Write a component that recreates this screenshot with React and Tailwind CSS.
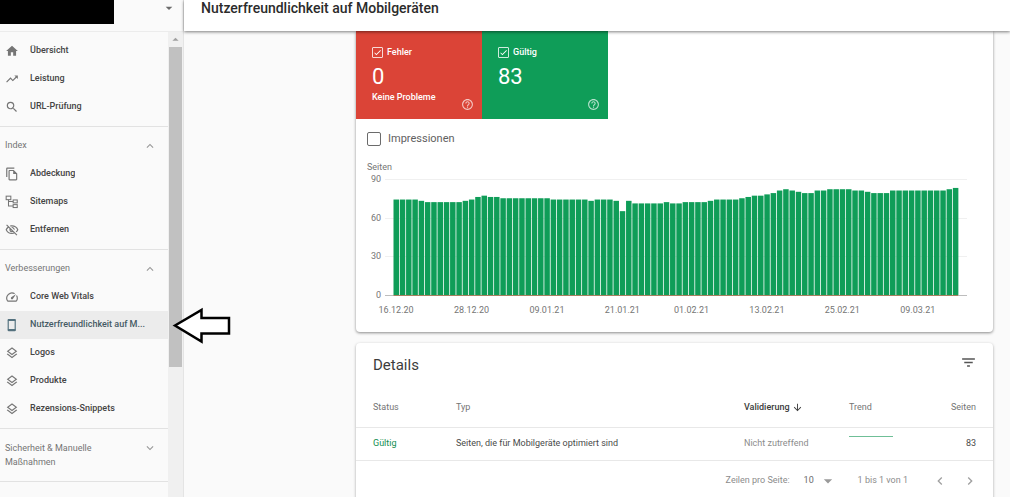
import React, { useState } from 'react';
import {
  MdArrowDownward,
  MdArrowDropDown,
  MdArrowDropUp,
  MdCheck,
  MdChevronLeft,
  MdChevronRight,
  MdExpandLess,
  MdExpandMore,
  MdFilterList,
  MdHelpOutline,
  MdHome,
  MdOutlineFileCopy,
  MdOutlineLayers,
  MdOutlineSpeed,
  MdOutlineVisibilityOff,
  MdSearch,
  MdTrendingUp,
} from 'react-icons/md';

const SitemapIcon = ({ className }) => (
  <svg viewBox="0 0 24 24" className={className} fill="none" stroke="currentColor" strokeWidth="1.8" aria-hidden="true">
    <rect x="2" y="2" width="8" height="6" />
    <rect x="14" y="8.500" width="7" height="5" />
    <rect x="14" y="16.500" width="7" height="5" />
    <path d="M6 8v11H14M6 11H14" />
  </svg>
);

const PhoneIcon = ({ className }) => (
  <svg viewBox="0 0 24 24" className={className} fill="none" stroke="currentColor" aria-hidden="true">
    <rect x="5.5" y="2.5" width="12" height="19" rx="1" strokeWidth="2" />
    <path d="M5 3.5h13M5 20.5h13" strokeWidth="3" />
  </svg>
);

const NAV_SECTIONS = [
  {
    id: 'main',
    items: [
      { label: 'Übersicht', icon: MdHome },
      { label: 'Leistung', icon: MdTrendingUp },
      { label: 'URL-Prüfung', icon: MdSearch },
    ],
  },
  {
    id: 'index',
    title: 'Index',
    items: [
      { label: 'Abdeckung', icon: MdOutlineFileCopy },
      { label: 'Sitemaps', icon: SitemapIcon },
      { label: 'Entfernen', icon: MdOutlineVisibilityOff },
    ],
  },
  {
    id: 'enhancements',
    title: 'Verbesserungen',
    items: [
      { label: 'Core Web Vitals', icon: MdOutlineSpeed },
      { label: 'Nutzerfreundlichkeit auf M...', icon: PhoneIcon, active: true },
      { label: 'Logos', icon: MdOutlineLayers },
      { label: 'Produkte', icon: MdOutlineLayers },
      { label: 'Rezensions-Snippets', icon: MdOutlineLayers },
    ],
  },
];

// Valid pages per day, starting 16.12.20
const VALID_PAGES = [
  74, 74, 74, 74, 73, 72, 72, 72, 72, 72, 72, 73, 74, 76, 77, 76, 76, 75, 75, 75,
  75, 75, 75, 75, 75, 74, 74, 74, 74, 74, 74, 73, 74, 74, 74, 73, 65, 73, 71, 71,
  71, 71, 71, 72, 71, 71, 72, 72, 72, 72, 73, 74, 74, 74, 74, 75, 76, 77, 77, 78,
  79, 81, 82, 81, 80, 79, 79, 81, 81, 82, 82, 82, 82, 81, 81, 80, 79, 79, 79, 81,
  81, 81, 81, 81, 81, 81, 81, 81, 82, 83,
];
const DATE_LABELS = ['16.12.20', '28.12.20', '09.01.21', '21.01.21', '01.02.21', '13.02.21', '25.02.21', '09.03.21'];
const LABEL_DAYS = [0, 12, 24, 36, 47, 59, 71, 83];
const Y_TICKS = [90, 60, 30, 0];

const CHART = { left: 37.5, step: 6.285, barWidth: 5.5, base: 136, unit: 1.29 };

const NavItem = ({ label, icon: Icon, active }) => (
  <a
    href="#"
    aria-current={active ? 'page' : undefined}
    className={`flex h-7 items-center gap-[11px] pl-[5px] pr-2 ${active ? 'bg-[#ececec] text-[#455a64]' : 'text-[#444444]'}`}
  >
    <Icon className={`h-3.5 w-3.5 shrink-0 ${active ? 'text-[#54727f]' : 'text-[#757575]'}`} />
    <span className="truncate font-medium">{label}</span>
  </a>
);

const NavSection = ({ title, items }) => (
  <div className="border-b border-[#e2e2e2] py-[5px]">
    {title && (
      <button type="button" className="flex h-7 w-full items-center justify-between pl-[5px] pr-[11px] text-[#757575]">
        {title}
        <MdExpandLess className="h-3.5 w-3.5 text-[#999999]" />
      </button>
    )}
    {items.map(item => <NavItem key={item.label} {...item} />)}
  </div>
);

const Sidebar = () => (
  <aside className="flex w-[184px] shrink-0 flex-col border-r border-[#e4e4e4]">
    <button type="button" aria-label="Property auswählen" className="flex h-8 shrink-0 items-start justify-between border-b border-[#ececec] pr-1.5">
      <span className="h-6 w-[114px] bg-black" />
      <MdArrowDropDown className="h-4 w-4 text-[#6b6b6b]" />
    </button>
    <div className="flex min-h-0 flex-1">
      <nav className="min-w-0 flex-1 overflow-hidden text-[9px]">
        {NAV_SECTIONS.map(section => <NavSection key={section.id} {...section} />)}
        <div className="border-b border-[#e2e2e2] py-3">
          <button type="button" className="flex w-full items-start justify-between pl-[5px] pr-[11px] text-left leading-[14px] text-[#757575]">
            <span className="w-28">Sicherheit &amp; Manuelle Maßnahmen</span>
            <MdExpandMore className="h-3.5 w-3.5 text-[#999999]" />
          </button>
        </div>
      </nav>
      <div className="flex w-[15px] shrink-0 flex-col items-center bg-[#f0f0f0]">
        <MdArrowDropUp className="h-[15px] w-[15px] shrink-0 text-[#a0a0a0]" />
        <div className="w-full flex-1 px-px">
          <div className="h-[71%] bg-[#c1c1c1]" />
        </div>
      </div>
    </div>
  </aside>
);

const StatusTile = ({ label, count, note, color, checked, onChange }) => (
  <div className={`relative h-[88px] w-[126px] pl-4 pt-[15px] text-white ${color}`}>
    <label className="flex items-center gap-1 text-[9px] leading-3 font-medium">
      <span className="grid place-items-center">
        <input
          type="checkbox"
          checked={checked}
          onChange={onChange}
          className="col-start-1 row-start-1 h-[11px] w-[11px] appearance-none rounded-[1px] border border-white/80"
        />
        {checked && <MdCheck className="pointer-events-none col-start-1 row-start-1 h-[9px] w-[9px]" />}
      </span>
      {label}
    </label>
    <div className="mt-[7px] text-[22px] leading-6">{count}</div>
    {note && <div className="mt-0.5 text-[9px] leading-3 font-medium">{note}</div>}
    <button type="button" aria-label={`Hilfe zu ${label}`} className="absolute bottom-2 right-2">
      <MdHelpOutline className="h-[13px] w-[13px] opacity-70" />
    </button>
  </div>
);

const PagesChart = () => {
  const { left, step, barWidth, base, unit } = CHART;
  return (
    <svg viewBox="0 0 637 160" className="block w-full" role="img" aria-label="Gültige Seiten pro Tag">
      <g fontSize="9" fill="#757575">
        <text x="11" y="11">Seiten</text>
        {Y_TICKS.map(tick => (
          <text key={tick} x="25" y={base - tick * unit + 3} textAnchor="end">{tick}</text>
        ))}
        {DATE_LABELS.map((date, i) => (
          <text key={date} x={left + 2.6 + LABEL_DAYS[i] * step} y="154" textAnchor="middle">{date}</text>
        ))}
      </g>
      {Y_TICKS.map(tick => (
        <path
          key={tick}
          d={`M29 ${Math.round(base - tick * unit) + 0.5}H611`}
          stroke={tick === 0 ? '#bdbdbd' : '#f0f0f0'}
        />
      ))}
      {VALID_PAGES.map((value, i) => (
        <rect key={i} x={left + i * step} y={base - value * unit} width={barWidth} height={value * unit} fill="#0f9d58" />
      ))}
      <path d={`M${left} ${base + 0.5}H${left + 90 * step - 1}`} stroke="#a97f5f" />
    </svg>
  );
};

const DetailsCard = () => (
  <section className="flex-1 rounded-t-sm bg-white shadow-[0_1px_3px_rgba(0,0,0,0.35)]">
    <div className="flex h-[46px] items-center justify-between pl-[17px] pr-4">
      <h2 className="pb-0.5 text-[15px] text-[#3c3c3c]">Details</h2>
      <button type="button" aria-label="Tabelle filtern" className="pb-2">
        <MdFilterList className="h-[17px] w-[17px] text-[#555555]" />
      </button>
    </div>
    <table className="w-full table-fixed text-left text-[9px]">
      <colgroup>
        <col className="w-[100px]" />
        <col />
        <col className="w-[105px]" />
        <col className="w-16" />
        <col className="w-20" />
      </colgroup>
      <thead>
        <tr className="h-[38px] border-b border-[#e8e8e8] text-[#757575]">
          <th className="pl-[17px] font-normal">Status</th>
          <th className="font-normal">Typ</th>
          <th className="font-medium text-[#3c3c3c]" aria-sort="descending">
            <button type="button" className="flex items-center gap-0.5">
              Validierung
              <MdArrowDownward className="h-[11px] w-[11px]" />
            </button>
          </th>
          <th className="font-normal">Trend</th>
          <th className="pr-[17px] text-right font-normal">Seiten</th>
        </tr>
      </thead>
      <tbody>
        <tr className="h-[33px] border-b border-[#e8e8e8] text-[#4a4a4a]">
          <td className="pl-[17px] text-[#0f8d50]">Gültig</td>
          <td>Seiten, die für Mobilgeräte optimiert sind</td>
          <td className="text-[#8c8c8c]">Nicht zutreffend</td>
          <td>
            <svg viewBox="0 0 44 20" className="block h-5 w-11" aria-hidden="true">
              <path d="M0 2.5h44" stroke="#6fbf97" strokeWidth="1.2" />
            </svg>
          </td>
          <td className="pr-[17px] text-right">83</td>
        </tr>
      </tbody>
    </table>
    <div className="flex h-10 items-center justify-end pr-[15px] text-[9px] text-[#8c8c8c]">
      <label htmlFor="page-size">Zeilen pro Seite:</label>
      <span className="ml-3.5 grid w-[34px] items-center">
        <select id="page-size" className="col-start-1 row-start-1 w-full appearance-none text-[#6b6b6b]">
          <option>10</option>
        </select>
        <MdArrowDropDown className="pointer-events-none col-start-1 row-start-1 h-5 w-5 justify-self-end text-[#9a9a9a]" />
      </span>
      <span className="ml-5">1 bis 1 von 1</span>
      <button type="button" aria-label="Vorherige Seite" className="ml-6 text-[#a0a0a0]"><MdChevronLeft className="h-4 w-4" /></button>
      <button type="button" aria-label="Nächste Seite" className="ml-3.5 text-[#a0a0a0]"><MdChevronRight className="h-4 w-4" /></button>
    </div>
  </section>
);

export default function App() {
  const [showErrors, setShowErrors] = useState(true);
  const [showValid, setShowValid] = useState(true);
  const [showImpressions, setShowImpressions] = useState(false);

  return (
    <div className="relative flex h-screen overflow-hidden bg-[#fafafa] font-[Roboto,sans-serif]">
      <Sidebar />
      <div className="flex min-w-0 flex-1 flex-col">
        <header className="relative z-10 h-[31px] shrink-0 bg-white pl-[17px] shadow-[0_1px_3px_rgba(0,0,0,0.5)]">
          <h1 className="text-[14px] leading-4 font-medium text-[#2b2b2b]">Nutzerfreundlichkeit auf Mobilgeräten</h1>
        </header>
        <main className="flex flex-1 flex-col gap-[11px] pl-[172px] pr-[17px]">
          <section className="rounded-b-sm bg-white pb-[13px] shadow-[0_1px_3px_rgba(0,0,0,0.45)]">
            <div className="flex">
              <StatusTile
                label="Fehler"
                count={0}
                note="Keine Probleme"
                color="bg-[#db4437]"
                checked={showErrors}
                onChange={() => setShowErrors(!showErrors)}
              />
              <StatusTile
                label="Gültig"
                count={83}
                color="bg-[#0f9d58]"
                checked={showValid}
                onChange={() => setShowValid(!showValid)}
              />
            </div>
            <label className="flex h-10 w-fit items-center gap-[7px] pl-[11px] text-[11px] text-[#616161]">
              <input
                type="checkbox"
                checked={showImpressions}
                onChange={() => setShowImpressions(!showImpressions)}
                className="h-3.5 w-3.5 appearance-none rounded-xs border border-[#6b6b6b] checked:bg-[#6b6b6b]"
              />
              Impressionen
            </label>
            <PagesChart />
          </section>
          <DetailsCard />
        </main>
      </div>

      {/* Pointer to the active menu entry */}
      <svg viewBox="0 0 60 40" className="absolute left-[172px] top-[305px] h-10 w-[60px]" aria-hidden="true">
        <path d="M3 20.500L29.500 5V13H57V28.500H29.500V36.500Z" fill="#fff" stroke="#000" strokeWidth="2.500" />
      </svg>
    </div>
  );
}
